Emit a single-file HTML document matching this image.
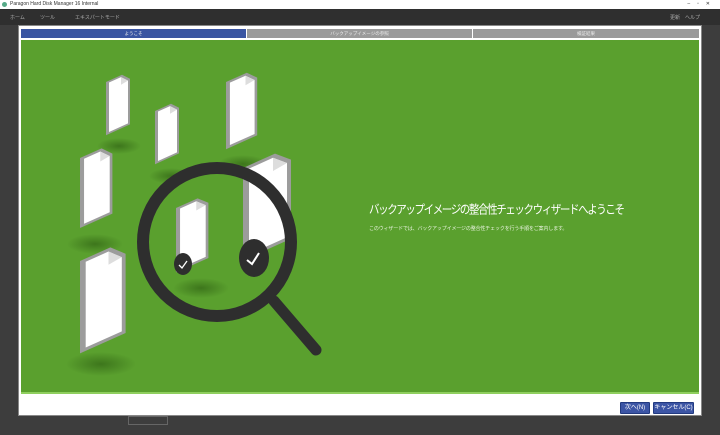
<!DOCTYPE html>
<html><head><meta charset="utf-8"><style>
*{margin:0;padding:0;box-sizing:border-box}
body{width:720px;height:435px;overflow:hidden;background:#3d3d3d;font-family:"Liberation Sans","Noto Sans CJK JP",sans-serif;position:relative}
.title{position:absolute;left:0;top:0;width:720px;height:9px;background:#fff;font-size:5px;line-height:9px;padding-left:10px;color:#333}
.tb{position:absolute;left:0;top:9px;width:720px;height:16px;background:#2f2f2f;font-size:5px;color:#aaa}
.dlg{position:absolute;left:18px;top:25px;width:684px;height:391px;background:#fff;border:1px solid #888}
.tab{position:absolute;top:3px;height:9px;font-size:4.5px;line-height:9px;text-align:center;color:#eee}
.green{position:absolute;left:2px;top:14px;width:678px;height:354px;background:#5aa02e;overflow:hidden;border-bottom:2px solid #8fcf5e}
h1{position:absolute;left:348px;top:161px;font-size:10.5px;font-weight:normal;color:#fff;white-space:nowrap;letter-spacing:-1.4px;transform:scaleY(1.15);transform-origin:left top}
p{position:absolute;left:348px;top:185px;font-size:5px;color:#e8f3df;white-space:nowrap;letter-spacing:-0.15px}
.btn{position:absolute;top:376px;height:12px;background:#3c55a5;border:1px solid #223a80;color:#fff;font-size:6px;line-height:10px;text-align:center;border-radius:1px;white-space:nowrap;overflow:hidden}
</style></head><body>
<div class="title"><span style="position:absolute;left:2px;top:2px;width:5px;height:5px;border-radius:50%;background:#5a8"></span>Paragon Hard Disk Manager 16 Internal<span style="position:absolute;right:10px">–&nbsp;&nbsp;&nbsp;&nbsp;&nbsp;▫&nbsp;&nbsp;&nbsp;&nbsp;&nbsp;✕</span></div>
<div class="tb"><span style="position:absolute;left:10px;top:5px">ホーム</span><span style="position:absolute;left:40px;top:5px">ツール</span><span style="position:absolute;left:75px;top:5px">エキスパートモード</span><span style="position:absolute;left:670px;top:5px">更新　ヘルプ</span></div>
<div class="dlg">
<div class="tab" style="left:2px;width:225px;background:#3a55a2">ようこそ</div>
<div class="tab" style="left:228px;width:225px;background:#9a9a9a">バックアップイメージの参照</div>
<div class="tab" style="left:454px;width:226px;background:#9a9a9a">検証結果</div>
<div class="green">
<svg width="678" height="354" style="position:absolute;left:0;top:0">
<defs><radialGradient id="s"><stop offset="0" stop-color="#2a5a10" stop-opacity=".6"/><stop offset="1" stop-color="#2a5a10" stop-opacity="0"/></radialGradient>
<g id="d"><polygon points="0,0 16,0 24,8 24,56 0,56" fill="#9c9c9c"/><polygon points="3,2 15,2 22,9 22,54 3,54" fill="#fff"/><polygon points="15,2 15,10 22,9" fill="#ddd"/></g></defs>
<g transform="translate(0,-24)">
<ellipse cx="98" cy="130" rx="22" ry="8" fill="url(#s)"/>
<ellipse cx="150" cy="160" rx="22" ry="8" fill="url(#s)"/>
<ellipse cx="222" cy="148" rx="25" ry="9" fill="url(#s)"/>
<ellipse cx="74" cy="228" rx="28" ry="10" fill="url(#s)"/>
<ellipse cx="80" cy="348" rx="35" ry="12" fill="url(#s)"/>
<ellipse cx="180" cy="272" rx="28" ry="10" fill="url(#s)"/>
<g transform="translate(85,66) matrix(1,-0.45,0,0.95,0,0)"><use href="#d"/></g>
<g transform="translate(134,95) matrix(1,-0.45,0,0.95,0,0)"><use href="#d"/></g>
<g transform="translate(205,66) matrix(1.3,-0.58,0,1.2,0,0)"><use href="#d"/></g>
<g transform="translate(59,142) matrix(1.35,-0.6,0,1.25,0,0)"><use href="#d"/></g>
<g transform="translate(222,152) matrix(2,-0.9,0,1.65,0,0)"><use href="#d"/></g>
<g transform="translate(155,192) matrix(1.35,-0.6,0,1.15,0,0)"><use href="#d"/></g>
<g transform="translate(59,245) matrix(1.9,-0.85,0,1.65,0,0)"><use href="#d"/></g>
<line x1="253" y1="285" x2="295" y2="334" stroke="#2e2e2e" stroke-width="11" stroke-linecap="round"/>
<circle cx="196" cy="226" r="74" fill="none" stroke="#2e2e2e" stroke-width="12"/>
<ellipse cx="162" cy="248" rx="9" ry="11" fill="#2e2e2e"/>
<path d="M158 249 l3 3 l5 -7" stroke="#fff" stroke-width="1.3" fill="none"/>
<ellipse cx="233" cy="242" rx="15" ry="19" fill="#2e2e2e"/>
<path d="M226 244 l5 4 l7 -11" stroke="#fff" stroke-width="2" fill="none"/>
</g>
</svg>
<h1>バックアップイメージの整合性チェックウィザードへようこそ</h1>
<p>このウィザードでは、バックアップイメージの整合性チェックを行う手順をご案内します。</p>
</div>
<div class="btn" style="left:601px;width:30px">次へ(N)</div>
<div class="btn" style="left:634px;width:41px">キャンセル(C)</div>
</div>
<div style="position:absolute;left:128px;top:416px;width:40px;height:9px;border:1px solid #666"></div>
</body></html>
